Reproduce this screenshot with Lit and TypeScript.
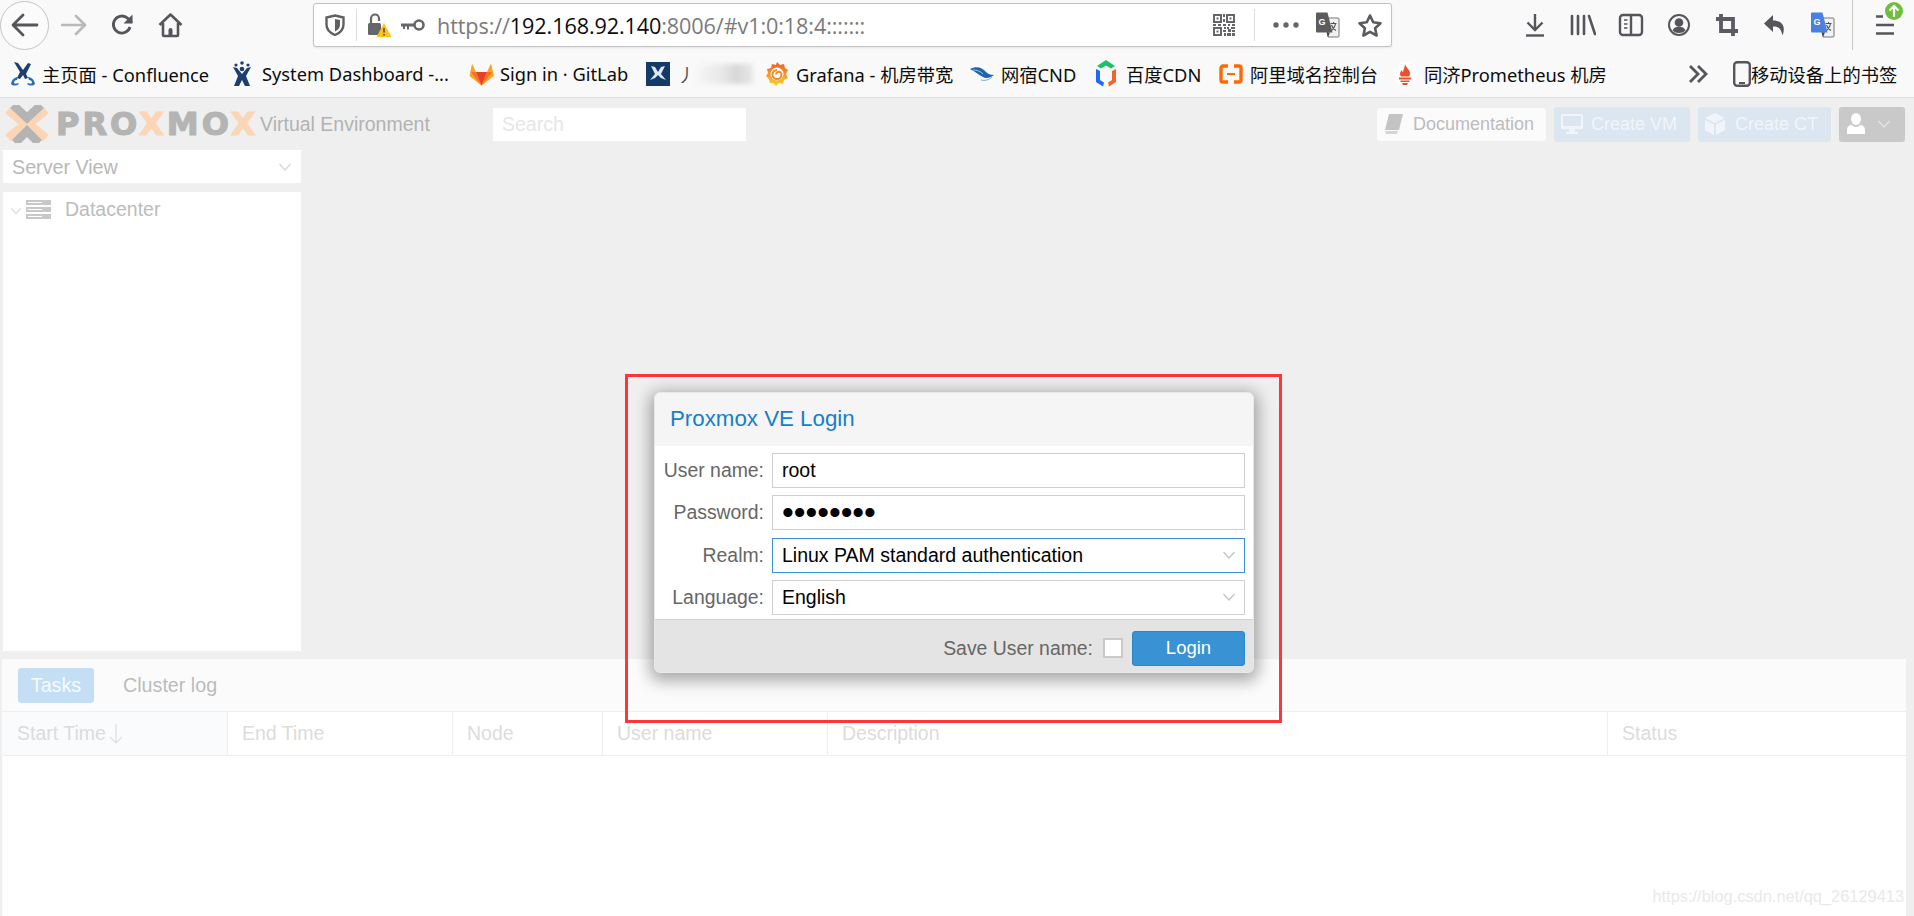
import { LitElement, html, css } from "lit";
import { customElement } from "lit/decorators.js";
import { styleMap } from "lit/directives/style-map.js";

const ink = "#55555c";

const translateIcon = (blue: boolean) => html`<svg width="26" height="26" viewBox="0 0 26 26">
  <path d="M11 6h12a1 1 0 0 1 1 1v17a1 1 0 0 1-1 1H13z" fill="#f1f1f1" stroke="#777" stroke-width="1"/>
  <path d="M15.5 11.5h6M18.5 10v1.500M20.500 11.500c-.7 4-3 6.500-5 7.500M16.500 13c.8 2.500 2.500 4.500 4.500 5.500" fill="none" stroke="#555" stroke-width="1.200"/>
  <path d="M1 1.500a1 1 0 0 1 1-1h10.500l5 20H2a1 1 0 0 1-1-1z" fill="${blue ? "#4a80e0" : "#5c5c5f"}"/>
  <path d="M15 20.500l-2 4.500-1.500-4.500z" fill="#444"/>
  <text x="3.500" y="13" font-family="Liberation Sans" font-size="9" font-weight="700" fill="#fff">G</text>
</svg>`;

const navIcons: Record<string, unknown> = {
  download: html`<svg width="24" height="26" viewBox="0 0 24 26" fill="none" stroke="${ink}" stroke-width="2.400"><path d="M12 2v15M4.500 10.500l7.500 7.500 7.500-7.500"/><path d="M3 23.500h18"/></svg>`,
  library: html`<svg width="26" height="24" viewBox="0 0 26 24" fill="none" stroke="${ink}" stroke-width="2.600" stroke-linecap="round"><path d="M2 3v18M8 3v18M14 3v18M19 3l6 18"/></svg>`,
  sidebar: html`<svg width="26" height="24" viewBox="0 0 26 24" fill="none" stroke="${ink}" stroke-width="2.400"><rect x="2" y="2" width="22" height="20" rx="3"/><path d="M13 2v20"/><path d="M6 7h3.500M6 11h3.500M6 15h3.500" stroke-width="1.600"/></svg>`,
  account: html`<svg width="24" height="24" viewBox="0 0 24 24"><circle cx="12" cy="12" r="10" fill="none" stroke="${ink}" stroke-width="2"/><circle cx="12" cy="9.500" r="4.300" fill="${ink}"/><path d="M5.500 17.500c1-3 3.500-3.800 6.500-3.800s5.500.8 6.500 3.800A9 9 0 0 1 12 20a9 9 0 0 1-6.500-2.500z" fill="${ink}"/></svg>`,
  crop: html`<svg width="24" height="24" viewBox="0 0 24 24" fill="none" stroke="#5b5b66" stroke-width="3.800"><path d="M6 1v17h17M1 6h17v17"/></svg>`,
  undo: html`<svg width="24" height="24" viewBox="0 0 24 24"><path d="M10 2L1 10.500 10 19v-5.500c5 0 8 1.500 9.500 9 3-7.500 1.500-15-9.500-15z" fill="${ink}"/></svg>`,
  gt: translateIcon(true),
};

const bookmarkIcons: Record<string, unknown> = {
  confluence: html`<svg width="24" height="24" viewBox="0 0 24 24"><path d="M3 0l4 1 5 7 5-7 3 1-5 10 2 4-3 1-2-4-3 4-3-1 3-6z" fill="#1c3f70"/><path d="M0 22c1-5 4-7 7-7l-1 3c-2 0-3 1-3 3 1 1 2 1 4 0l1 1c-3 2-6 2-8 0zM24 22c-1-5-4-7-7-7l1 3c2 0 3 1 3 3-1 1-2 1-4 0l-1 1c3 2 6 2 8 0z" fill="#2b6cb0"/></svg>`,
  jira: html`<svg width="22" height="26" viewBox="0 0 22 26"><circle cx="11" cy="2" r="1.800" fill="#1c3f70"/><circle cx="5" cy="4" r="1.600" fill="#1c3f70"/><circle cx="17" cy="4" r="1.600" fill="#1c3f70"/><path d="M2 6l4 1 5 6 5-6 4-1-5 9 4 10h-5l-3-6-3 6H3l4-10z" fill="#1c3f70"/><circle cx="11" cy="8" r="2.300" fill="#1c3f70"/></svg>`,
  gitlab: html`<svg width="25" height="24" viewBox="0 0 25 24"><path d="M12.500 23.500L0.500 14 3 1.500 7 10h11l4-8.500 3 12.500z" fill="#fca326"/><path d="M12.500 23.500L7 10h11z" fill="#e24329"/><path d="M12.500 23.500L2 10h5zM12.500 23.500L23 10h-5z" fill="#fc6d26"/></svg>`,
  square: html`<svg width="24" height="24" viewBox="0 0 24 24"><rect width="24" height="24" fill="#143a68"/><path d="M5 4l4 1 3 5 3-5 4-1-4 8 5 6-5-2-3-3-3 3-5 2 5-6z" fill="#dfe8f2"/></svg>`,
  grafana: html`<svg width="24" height="26" viewBox="0 0 24 26"><defs><linearGradient id="gf" x1="0" y1="1" x2="0" y2="0"><stop offset="0" stop-color="#fcd22e"/><stop offset="1" stop-color="#ee5a24"/></linearGradient></defs><path d="M12 1l3 3 4-1 1 4 3 2-2 4 2 4-4 2-1 4-4-1-3 3-3-3-3 0-1-4-3-3 2-3-1-4 4-1 1-4 4 1z" fill="url(#gf)"/><circle cx="12" cy="13" r="6.500" fill="#fff"/><path d="M12 9a4.500 4.500 0 1 0 4.500 4.500 2.700 2.700 0 1 0-5.400 0" fill="none" stroke="#f28a24" stroke-width="2"/></svg>`,
  wangsu: html`<svg width="24" height="16" viewBox="0 0 24 16"><path d="M0 3c6-3 12-2 16 3 2 2 4 3 8 3-4 3-8 4-11 2C9 9 4 5 0 3z" fill="#1f64ad"/><path d="M3 4c4 0 7 1 10 4" stroke="#9cc4e8" fill="none"/><path d="M11 14c4 1 8 0 11-3" stroke="#7aa8d6" fill="none"/></svg>`,
  baidu: html`<svg width="22" height="28" viewBox="0 0 22 28"><path d="M11 0l9 6-4 2.500-5-3-5 3-4-2.500z" fill="#1fbf6b"/><path d="M1 9l4 2v9l4 2.500-1 4L1 22z" fill="#2468f2"/><path d="M21 9l-4 2v9l-4 2.500 1 4 7-4.500z" fill="#f0662e"/></svg>`,
  ali: html`<svg width="24" height="20" viewBox="0 0 24 20" fill="none" stroke="#ff6a00" stroke-width="3.400"><path d="M9 2H4a2 2 0 0 0-2 2v12a2 2 0 0 0 2 2h5M15 2h5a2 2 0 0 1 2 2v12a2 2 0 0 1-2 2h-5"/><path d="M8 10h8" stroke-width="2"/></svg>`,
  prom: html`<svg width="24" height="24" viewBox="0 0 24 24"><circle cx="12" cy="12" r="12" fill="#fff"/><path d="M12 2c1 4 5 5 5 10 0 1-.4 1.800-1 2.500H8c-.6-.7-1-1.500-1-2.500 0-2 1-3 2-4 0 1 .5 2 1 2 .5-3 2-5 2-8z" fill="#e6522c"/><path d="M6 15.500h12v2H6zM7.500 18.500h9v1.500h-9zM9 21h6l-1 2h-4z" fill="#e6522c"/></svg>`,
};

const bookmarks = [
  { i: "confluence", t: "主页面 - Confluence", w: 220 },
  { i: "jira", t: "System Dashboard -...", w: 238 },
  { i: "gitlab", t: "Sign in · GitLab", w: 177 },
  { i: "square", t: "", w: 119 },
  { i: "grafana", t: "Grafana - 机房带宽", w: 205 },
  { i: "wangsu", t: "网宿CND", w: 125 },
  { i: "baidu", t: "百度CDN", w: 124 },
  { i: "ali", t: "阿里域名控制台", w: 174 },
  { i: "prom", t: "同济Prometheus 机房", w: 280 },
];

const columns = [
  { t: "Start Time", w: 225, sorted: true },
  { t: "End Time", w: 225 },
  { t: "Node", w: 150 },
  { t: "User name", w: 225 },
  { t: "Description", w: 780 },
  { t: "Status", w: 298 },
];

const fields = [
  { l: "User name:", v: "root" },
  { l: "Password:", v: "••••••••", pw: true },
  { l: "Realm:", v: "Linux PAM standard authentication", sel: true, focus: true },
  { l: "Language:", v: "English", sel: true },
];

const chevron = (c: string, s = 14) => html`<svg width="${s}" height="${s}" viewBox="0 0 14 14" fill="none" stroke="${c}" stroke-width="1.300"><path d="M1.500 4l5.500 6 5.500-6"/></svg>`;

@customElement("app-root")
export class AppRoot extends LitElement {
  static styles = css`
    :host { display: block; position: relative; width: 1914px; height: 916px; overflow: hidden; font-family: "Liberation Sans", Arial, sans-serif; background: #efefef; }
    * { box-sizing: border-box; }
    .nav { height: 50px; background: #f9f9fa; display: flex; align-items: center; }
    .cell { width: 48px; height: 50px; display: flex; align-items: center; justify-content: center; flex: none; position: relative; }
    .back { width: 49px; height: 49px; margin-right: 1px; border: 1px solid #c4c4c4; border-radius: 50%; background: #fbfbfb; display: flex; align-items: center; justify-content: center; flex: none; }
    .urlbar { margin: 0 119px 0 119px; width: 1079px; height: 44px; flex: none; background: #fff; border: 1px solid #c2c2c4; border-radius: 3px; display: flex; align-items: center; box-shadow: 0 1px 2px rgba(0,0,0,.08); }
    .ucell { height: 41px; display: flex; align-items: center; justify-content: center; flex: none; position: relative; }
    .w24 { width: 24px; } .w32 { width: 32px; } .w42 { width: 42px; } .w44 { width: 44px; }
    .usep { width: 1px; height: 32px; background: #dcdcde; flex: none; }
    .qrsep { margin: 0 10px 0 14px; }
    .url { font-family: "Open Sans", "Noto Sans", sans-serif; font-size: 21.600px; color: #7a7a7c; margin-left: 12px; white-space: nowrap; flex: 1; letter-spacing: -0.100px; }
    .url b { font-weight: 400; color: #0c0c0d; }
    .ctl-sep { width: 1px; height: 50px; background: #c8c8ca; margin: 0 8px 0 5px; flex: none; }
    .badge { position: absolute; left: 24px; top: 2px; width: 18px; height: 18px; }

    .marks { height: 48px; background: #f9f9fa; border-bottom: 1px solid #dedede; padding-left: 11px; display: flex; align-items: center; font-family: "Noto Sans", "Noto Sans CJK SC", sans-serif; font-size: 18.300px; color: #0c0c0d; }
    .mark { display: flex; align-items: center; flex: none; height: 46px; white-space: nowrap; }
    .micon { width: 31px; display: flex; align-items: center; justify-content: flex-start; flex: none; }
    .blurtext { color: #555; margin-right: 2px; }
    .blur { width: 56px; height: 20px; background: linear-gradient(90deg, #f5f5f5, #e8e8e8 45%, #d6d6d6 70%, #e8e8e8 100%); filter: blur(2px); }
    .more { width: 24px; display: flex; justify-content: center; margin-left: 13px; flex: none; }
    .phone { margin-left: 23px; display: flex; align-items: center; gap: 0; white-space: nowrap; flex: none; }

    .page { display: flex; flex-direction: column; height: 818px; }
    .head { height: 52px; display: flex; align-items: center; flex: none; padding: 0 9px 0 5px; }
    .logo { display: flex; align-items: center; width: 255px; flex: none; height: 40px; }
    .logotext { font-family: "DejaVu Sans", "Liberation Sans", sans-serif; font-weight: 700; font-size: 32px; letter-spacing: 3px; color: #b4b4b4; -webkit-text-stroke: 1.200px currentColor; margin-left: 7px; line-height: 40px; white-space: nowrap; }
    .logotext span { color: #fbd6b6; }
    .ve { font-size: 19.500px; color: #b2b2b2; white-space: nowrap; width: 233px; flex: none; }
    .search { width: 253px; height: 33px; background: #fff; color: #e6e6e6; font-size: 19.500px; display: flex; align-items: center; padding-left: 9px; flex: none; }
    .actions { margin-left: auto; display: flex; align-items: center; gap: 8px; }
    .btn { height: 35px; border-radius: 3px; display: flex; align-items: center; font-size: 18px; white-space: nowrap; flex: none; }
    .doc { width: 169px; height: 33px; background: #fbfbfb; color: #bcbcbc; padding-left: 7px; gap: 9px; }
    .vm { width: 136px; background: #dbe6f0; color: #f1f5f9; padding-left: 7px; gap: 8px; }
    .ct { width: 133px; background: #dbe6f0; color: #f1f5f9; padding-left: 7px; gap: 10px; }
    .user { width: 66px; background: #c9c9c9; padding-left: 8px; gap: 12px; }

    .mid { flex: none; height: 501px; padding-left: 3px; display: flex; flex-direction: column; gap: 9px; }
    .view { width: 298px; height: 33px; background: #fff; color: #b8b8b8; font-size: 19.700px; display: flex; align-items: center; justify-content: space-between; padding: 1px 9px 0; flex: none; }
    .tree { width: 298px; height: 459px; background: #fff; flex: none; }
    .dc { height: 34px; display: flex; align-items: center; color: #bcbcbc; font-size: 19.500px; padding-left: 7px; }
    .dc svg:first-child { margin-top: 4px; }
    .dc svg + svg { margin: 0 14px 0 4px; }

    .panel { margin: 8px 0 0 2px; width: 1904px; flex: 1; display: flex; flex-direction: column; background: #fbfbfb; }
    .tabs { height: 53px; flex: none; border-bottom: 1px solid #eeeeee; padding: 9px 0 0 16px; display: flex; align-items: flex-start; font-size: 19.700px; }
    .tab { height: 35px; display: flex; align-items: center; border-radius: 3px; }
    .tab.on { width: 76px; background: #c4dff4; color: #f6fbfe; justify-content: center; }
    .tab.off { margin-left: 29px; color: #bbbbbb; }
    .thead { height: 44px; flex: none; margin-left: 1px; background: #fff; display: flex; border-bottom: 1px solid #eeeeee; }
    .th { height: 43px; display: flex; align-items: center; border-right: 1px solid #eeeeee; padding-left: 14px; color: #dcdcdc; font-size: 19.500px; flex: none; gap: 3px; }
    .th.sorted { background: #fafbfc; }
    .th:last-child { border-right: none; }
    .tbody { flex: 1; margin-left: 1px; background: #fff; }

    .redbox { position: absolute; left: 625px; top: 374px; width: 657px; height: 349px; border: 3px solid #ff3636; pointer-events: none; }
    .dialog { position: absolute; left: 654px; top: 392px; width: 600px; height: 281px; border-radius: 6px; background: #e4e4e4; border: 1px solid #e9e9e9; box-shadow: 0 4px 16px 4px rgba(0,0,0,.33); display: flex; flex-direction: column; overflow: hidden; }
    .dhead { height: 53px; flex: none; background: #f5f5f5; color: #157fcc; font-size: 22.300px; display: flex; align-items: center; padding: 0 0 2px 15px; }
    .dbody { height: 174px; flex: none; background: #fff; padding: 7px 8px 0 0; display: flex; flex-direction: column; gap: 7.300px; border-bottom: 1px solid #d0d0d0; }
    .frow { display: flex; height: 35px; flex: none; align-items: center; }
    .flabel { width: 109px; text-align: right; color: #666; font-size: 19.400px; flex: none; white-space: nowrap; }
    .input { margin-left: 8px; flex: 1; height: 35px; border: 1px solid #cfcfcf; display: flex; align-items: center; padding-left: 9px; color: #000; font-size: 19.500px; justify-content: space-between; padding-right: 8px; background: #fff; white-space: nowrap; }
    .input.focus { border-color: #3892d4; }
    .pw { font-size: 33.500px; line-height: 33px; height: 33px; }
    .dfoot { flex: 1; display: flex; align-items: center; justify-content: flex-end; padding: 4px 8px 0 0; color: #666; font-size: 19.400px; }
    .check { width: 20px; height: 20px; border: 2px solid #c9c9c9; background: #fff; margin: 0 9px 0 10px; flex: none; }
    .login { width: 113px; height: 35px; background: #3892d4; color: #fff; border-radius: 3px; font-size: 18.500px; display: flex; align-items: center; justify-content: center; border: 1px solid #2f86c6; }
    .mark-water { position: absolute; right: 10px; bottom: 10px; color: #e9e9e9; font-size: 16.400px; }
  `;

  render() {
    return html`
      <div class="nav">
        <div class="back"><svg width="28" height="24" viewBox="0 0 28 24" fill="none" stroke="#55555a" stroke-width="2.800" stroke-linecap="round" stroke-linejoin="round"><path d="M26 12H3M12 2L2 12l10 10"/></svg></div>
        <div class="cell"><svg width="26" height="22" viewBox="0 0 26 22" fill="none" stroke="#b9b9bb" stroke-width="2.600" stroke-linecap="round" stroke-linejoin="round"><path d="M1 11h22M15 2l9 9-9 9"/></svg></div>
        <div class="cell"><svg width="24" height="24" viewBox="0 0 24 24" fill="none" stroke="#55555a" stroke-width="2.800"><path d="M20 14a8.500 8.500 0 1 1-2.300-8.700L22 9.500"/><path d="M22.500 1.500v9h-9" stroke-width="0" fill="#55555a"/></svg></div>
        <div class="cell"><svg width="25" height="25" viewBox="0 0 25 25" fill="none" stroke="#55555a" stroke-width="2.600" stroke-linejoin="round"><path d="M1.500 12L12.500 1.500 23.500 12M5 10v12a1 1 0 0 0 1 1h13a1 1 0 0 0 1-1V10"/><path d="M10.500 23v-6a2 2 0 0 1 4 0v6" stroke-width="0" fill="#55555a"/></svg></div>
        <div class="urlbar">
          <div class="ucell w42"><svg width="20" height="22" viewBox="0 0 20 22"><path d="M10 1.500l8.500 2v7c0 5-3.500 8.500-8.500 10.500-5-2-8.500-5.500-8.500-10.500v-7z" fill="none" stroke="#606063" stroke-width="2.400"/><path d="M10 5l5 1v5c0 3-2 5-5 6.500z" fill="#606063"/></svg></div>
          <div class="usep"></div>
          <div class="ucell w44"><svg width="26" height="26" viewBox="0 0 26 26"><rect x="2" y="11" width="13" height="12" rx="1.500" fill="#66666a"/><path d="M5 11V6.500a4 4 0 0 1 8 0V9" fill="none" stroke="#66666a" stroke-width="2.200"/><path d="M18 11l7.500 14h-15z" fill="#ffc21a"/><path d="M18 16v4.500M18 22v1.500" stroke="#3b3b3b" stroke-width="1.400"/></svg></div>
          <div class="ucell w24"><svg width="24" height="14" viewBox="0 0 24 14"><circle cx="18" cy="7" r="4.500" fill="none" stroke="#66666a" stroke-width="2.600"/><path d="M0 5.500h13v3H8v3H6v-3H4v2.500H2V8.500H0z" fill="#66666a"/></svg></div>
          <div class="url">https://<b>192.168.92.140</b>:8006/#v1:0:18:4:::::::</div>
          <div class="ucell w32"><svg width="22" height="22" viewBox="0 0 22 22" fill="#66666a"><path fill-rule="evenodd" d="M0 0h9v9H0zM2 2v5h5V2zM13 0h9v9h-9zM15 2v5h5V2zM0 13h9v9H0zM2 15v5h5v-5z"/><path d="M3.500 3.500h2v2h-2zM16.500 3.500h2v2h-2zM3.500 16.500h2v2h-2zM10 0h2v3h-2zM10 5h2v3h-2zM0 10h3v2H0zM5 10h3v2H5zM10 10h3v2h-3zM15 10h2v2h-2zM19 10h3v2h-3zM11 13h2v2h-2zM14 13h2v2h-2zM18 13h4v2h-4zM10 16h3v2h-3zM15 15h3v3h-3zM19 16h3v2h-3zM11 19h2v3h-2zM14 19h4v3h-4zM19 19h3v3h-3z"/></svg></div>
          <div class="usep qrsep"></div>
          <div class="ucell w42"><svg width="26" height="6" viewBox="0 0 26 6" fill="#66666a"><circle cx="3" cy="3" r="2.700"/><circle cx="13" cy="3" r="2.700"/><circle cx="23" cy="3" r="2.700"/></svg></div>
          <div class="ucell w42">${translateIcon(false)}</div>
          <div class="ucell w42"><svg width="26" height="25" viewBox="0 0 26 25" fill="none" stroke="#5b5b5f" stroke-width="2.600" stroke-linejoin="round"><path d="M13 2.500l3.200 6.800 7.300.9-5.400 5 1.500 7.300-6.600-3.700-6.600 3.700 1.500-7.300-5.400-5 7.300-.9z"/></svg></div>
        </div>
        ${["download", "library", "sidebar", "account", "crop", "undo", "gt"].map((k) => html`<div class="cell">${navIcons[k]}</div>`)}
        <div class="ctl-sep"></div>
        <div class="cell">
          <svg width="20" height="22" viewBox="0 0 20 22" stroke="${ink}" stroke-width="2.600"><path d="M1 2.500h7M1 11h18M1 19.500h18"/></svg>
          <svg class="badge" viewBox="0 0 18 18"><circle cx="9" cy="9" r="9" fill="#6fbf3f"/><path d="M9 15V4.500M4.500 8.500L9 4l4.500 4.500" fill="none" stroke="#fff" stroke-width="2.200"/></svg>
        </div>
      </div>

      <div class="marks">
        ${bookmarks.map((b) => html`<div class="mark" style=${styleMap({ width: b.w + "px" })}>
          <span class="micon">${bookmarkIcons[b.i]}</span>${b.t ? html`<span>${b.t}</span>` : html`<span class="blurtext">丿</span><div class="blur"></div>`}
        </div>`)}
        <div class="more"><svg width="20" height="20" viewBox="0 0 20 20" fill="none" stroke="${ink}" stroke-width="2.800"><path d="M2 2l8 8-8 8M10 2l8 8-8 8"/></svg></div>
        <div class="phone"><svg width="18" height="26" viewBox="0 0 18 26"><rect x="1.200" y="1.200" width="15.600" height="23.600" rx="3" fill="none" stroke="${ink}" stroke-width="2.400"/><rect x="6" y="21" width="6" height="2" fill="${ink}"/></svg><span>移动设备上的书签</span></div>
      </div>

      <div class="page">
        <div class="head">
          <div class="logo">
            <svg width="44" height="38" viewBox="0 0 44 38" fill="none" stroke-width="8.500">
              <path d="M3 5l17 14L3 33" stroke="#fbd6b6"/><path d="M41 5L24 19l17 14" stroke="#fbd6b6"/>
              <path d="M8 0l14 13L36 0" stroke="#b4b4b4"/><path d="M10 38l12-12 12 12" stroke="#b4b4b4"/>
            </svg>
            <span class="logotext">PRO<span>X</span>MO<span>X</span></span>
          </div>
          <div class="ve">Virtual Environment</div>
          <div class="search">Search</div>
          <div class="actions">
            <div class="btn doc"><svg width="20" height="22" viewBox="0 0 20 22" fill="#c4c4c4"><path d="M5 1h14l-4 16H1z"/><path d="M1 18h13l-1 3H2z" fill="#d6d6d6"/></svg>Documentation</div>
            <div class="btn vm"><svg width="22" height="22" viewBox="0 0 22 22" fill="#f1f5f9"><path fill-rule="evenodd" d="M1 1h20a1 1 0 0 1 1 1v13a1 1 0 0 1-1 1H1a1 1 0 0 1-1-1V2a1 1 0 0 1 1-1zm1 2v10h18V3z"/><path d="M8 16h6v3h3v2H5v-2h3z"/></svg>Create VM</div>
            <div class="btn ct"><svg width="20" height="22" viewBox="0 0 20 22" fill="#f1f5f9"><path d="M10 0l10 5-10 5L0 5z"/><path d="M0 7l9 4.500V22L0 17zM20 7l-9 4.500V22l9-5z"/></svg>Create CT</div>
            <div class="btn user"><svg width="18" height="22" viewBox="0 0 18 22" fill="#fff"><ellipse cx="9" cy="6" rx="5" ry="6"/><path d="M0 21v-4c0-3 2-5 5-5 1 1 2.500 2 4 2s3-1 4-2c3 0 5 2 5 5v4z"/></svg>${chevron("#e4e4e4")}</div>
          </div>
        </div>
        <div class="mid">
          <div class="view"><span>Server View</span>${chevron("#d8d8d8")}</div>
          <div class="tree">
            <div class="dc">
              ${chevron("#dcdcdc", 12)}
              <svg width="25" height="19" viewBox="0 0 25 19" fill="#c8c8c8"><path fill-rule="evenodd" d="M0 0h25v5H0zM2 2v1h14V2zM0 7h25v5H0zM2 9v1h14V9zM0 14h25v5H0zM2 16v1h14v-1z"/></svg>
              <span>Datacenter</span>
            </div>
          </div>
        </div>
        <div class="panel">
          <div class="tabs"><div class="tab on">Tasks</div><div class="tab off">Cluster log</div></div>
          <div class="thead">
            ${columns.map((c) => html`<div class="th ${c.sorted ? "sorted" : ""}" style=${styleMap({ width: c.w + "px" })}>${c.t}${c.sorted ? html`<svg width="14" height="22" viewBox="0 0 14 22" fill="none" stroke="#e2e2e2" stroke-width="1.400"><path d="M7 1v19M1 14l6 6 6-6"/></svg>` : ""}</div>`)}
          </div>
          <div class="tbody"></div>
        </div>
      </div>

      <div class="dialog">
        <div class="dhead">Proxmox VE Login</div>
        <div class="dbody">
          ${fields.map((f) => html`<div class="frow">
            <div class="flabel">${f.l}</div>
            <div class="input ${f.focus ? "focus" : ""}"><span class="${f.pw ? "pw" : ""}">${f.v}</span>${f.sel ? chevron("#c4c4c4") : ""}</div>
          </div>`)}
        </div>
        <div class="dfoot">Save User name:<div class="check"></div><div class="login">Login</div></div>
      </div>
      <div class="redbox"></div>
      <div class="mark-water">https://blog.csdn.net/qq_26129413</div>
    `;
  }
}
